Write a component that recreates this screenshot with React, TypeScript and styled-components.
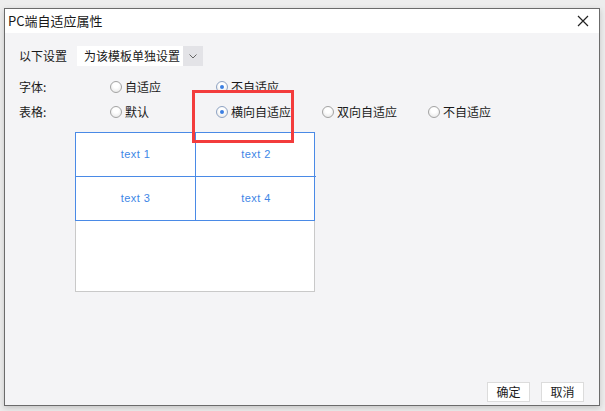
import React from 'react';
import styled, {createGlobalStyle} from 'styled-components';

const GlobalStyle = createGlobalStyle`
    html, body {
        margin: 0;
        padding: 0;
        background: #ededed;
        font-family: "Noto Sans CJK SC", "Liberation Sans", sans-serif;
        font-size: 12px;
        color: #1a1a1a;
    }
`;

const Screen = styled.div`
    width: 605px;
    height: 411px;
    padding: 8px 0 0 4px;
    box-sizing: border-box;
    overflow: hidden;
`;

const Dialog = styled.div`
    position: relative;
    width: 596px;
    height: 398px;
    box-sizing: border-box;
    border: 1px solid #6b6b6b;
    background: #f4f4f6;
    display: flex;
    flex-direction: column;
    box-shadow: 0 2px 6px rgba(0, 0, 0, 0.18);
`;

const TitleBar = styled.div`
    height: 24px;
    background: #ffffff;
    display: flex;
    align-items: center;
    justify-content: space-between;
    padding: 0 10px 0 3px;
    font-size: 13px;
    line-height: 24px;
`;

const CloseButton = styled.span`
    width: 12px;
    height: 12px;
    display: flex;
    align-items: center;
    justify-content: center;
`;

const Body = styled.div`
    flex: 1;
    display: flex;
    flex-direction: column;
    padding: 13px 14px 3px 14px;
`;

const Row = styled.div<{ $gap?: number }>`
    display: flex;
    align-items: center;
    height: 20px;
    margin-top: ${p => p.$gap ?? 0}px;
`;

const Label = styled.span<{ $width?: number }>`
    width: ${p => p.$width ?? 91}px;
    flex-shrink: 0;
    line-height: 20px;
`;

const Select = styled.div`
    display: flex;
    height: 20px;
    background: #ffffff;
    margin-left: -33px;
`;

const SelectValue = styled.span`
    padding: 0 3px 0 7px;
    line-height: 20px;
`;

const SelectArrow = styled.span`
    width: 20px;
    background: #e3e3e7;
    display: flex;
    align-items: center;
    justify-content: center;
`;

const Option = styled.label`
    width: 106px;
    display: flex;
    align-items: center;
    gap: 3px;
    line-height: 20px;
    flex-shrink: 0;
`;

const RadioCircle = styled.span<{ $checked?: boolean }>`
    width: 10px;
    height: 10px;
    border-radius: 50%;
    border: 1px solid ${p => (p.$checked ? '#8ea3c4' : '#a3a3a3')};
    background: radial-gradient(circle at 50% 35%, #ffffff 30%, #e2e2e2 100%);
    display: flex;
    align-items: center;
    justify-content: center;

    &::after {
        content: '';
        width: 4px;
        height: 4px;
        border-radius: 50%;
        background: ${p => (p.$checked ? '#3c7fe2' : 'transparent')};
    }
`;

const Preview = styled.div`
    margin: 10px 0 0 56px;
    width: 240px;
    height: 160px;
    box-sizing: border-box;
    background: #ffffff;
    border: 1px solid #c9c9c9;
    display: flex;
    flex-direction: column;
`;

const Grid = styled.div`
    margin: -1px -1px 0 -1px;
    display: grid;
    grid-template-columns: 120px 120px;
    grid-template-rows: 44px 44px;
    border: 1px solid #4a8ae6;
    box-sizing: border-box;
    height: 89px;
`;

const Cell = styled.div<{ $right?: boolean; $bottom?: boolean }>`
    display: flex;
    align-items: center;
    justify-content: center;
    border-right: ${p => (p.$right ? 'none' : '1px solid #4a8ae6')};
    border-bottom: ${p => (p.$bottom ? 'none' : '1px solid #4a8ae6')};
    color: #3d86e6;
    font-family: "Liberation Sans", sans-serif;
    font-size: 11px;
    letter-spacing: 0.4px;
    padding-bottom: 2px;
`;

const Footer = styled.div`
    margin-top: auto;
    display: flex;
    justify-content: flex-end;
    gap: 11px;
    padding-right: 1px;
`;

const Button = styled.button`
    width: 43px;
    height: 20px;
    padding: 0;
    border: 1px solid #dcdcdc;
    background: #ffffff;
    font-family: "Noto Sans CJK SC", sans-serif;
    font-size: 12px;
    color: #1a1a1a;
    line-height: 18px;
`;

const Highlight = styled.div`
    position: absolute;
    left: 187px;
    top: 81px;
    width: 102px;
    height: 53px;
    box-sizing: border-box;
    border: 3px solid #f33c3c;
    pointer-events: none;
`;

function Radio({checked, label}: { checked?: boolean; label: string }) {
    return (
        <Option>
            <RadioCircle $checked={checked}/>
            {label}
        </Option>
    );
}

function App() {
    return (
        <>
            <GlobalStyle/>
            <Screen>
                <Dialog>
                    <TitleBar>
                        PC端自适应属性
                        <CloseButton>
                            <svg width="12" height="12" viewBox="0 0 12 12">
                                <path d="M1 1 L11 11 M11 1 L1 11" stroke="#222" strokeWidth="1.2"/>
                            </svg>
                        </CloseButton>
                    </TitleBar>
                    <Body>
                        <Row>
                            <Label>以下设置</Label>
                            <Select>
                                <SelectValue>为该模板单独设置</SelectValue>
                                <SelectArrow>
                                    <svg width="8" height="5" viewBox="0 0 8 5">
                                        <path d="M0.5 0.5 L4 4 L7.5 0.5" stroke="#666" fill="none"/>
                                    </svg>
                                </SelectArrow>
                            </Select>
                        </Row>
                        <Row $gap={11}>
                            <Label>字体:</Label>
                            <Radio label="自适应"/>
                            <Radio checked label="不自适应"/>
                        </Row>
                        <Row $gap={5}>
                            <Label>表格:</Label>
                            <Radio label="默认"/>
                            <Radio checked label="横向自适应"/>
                            <Radio label="双向自适应"/>
                            <Radio label="不自适应"/>
                        </Row>
                        <Preview>
                            <Grid>
                                <Cell>text 1</Cell>
                                <Cell $right>text 2</Cell>
                                <Cell $bottom>text 3</Cell>
                                <Cell $right $bottom>text 4</Cell>
                            </Grid>
                        </Preview>
                        <Footer>
                            <Button>确定</Button>
                            <Button>取消</Button>
                        </Footer>
                    </Body>
                    <Highlight/>
                </Dialog>
            </Screen>
        </>
    );
}

export default App;
